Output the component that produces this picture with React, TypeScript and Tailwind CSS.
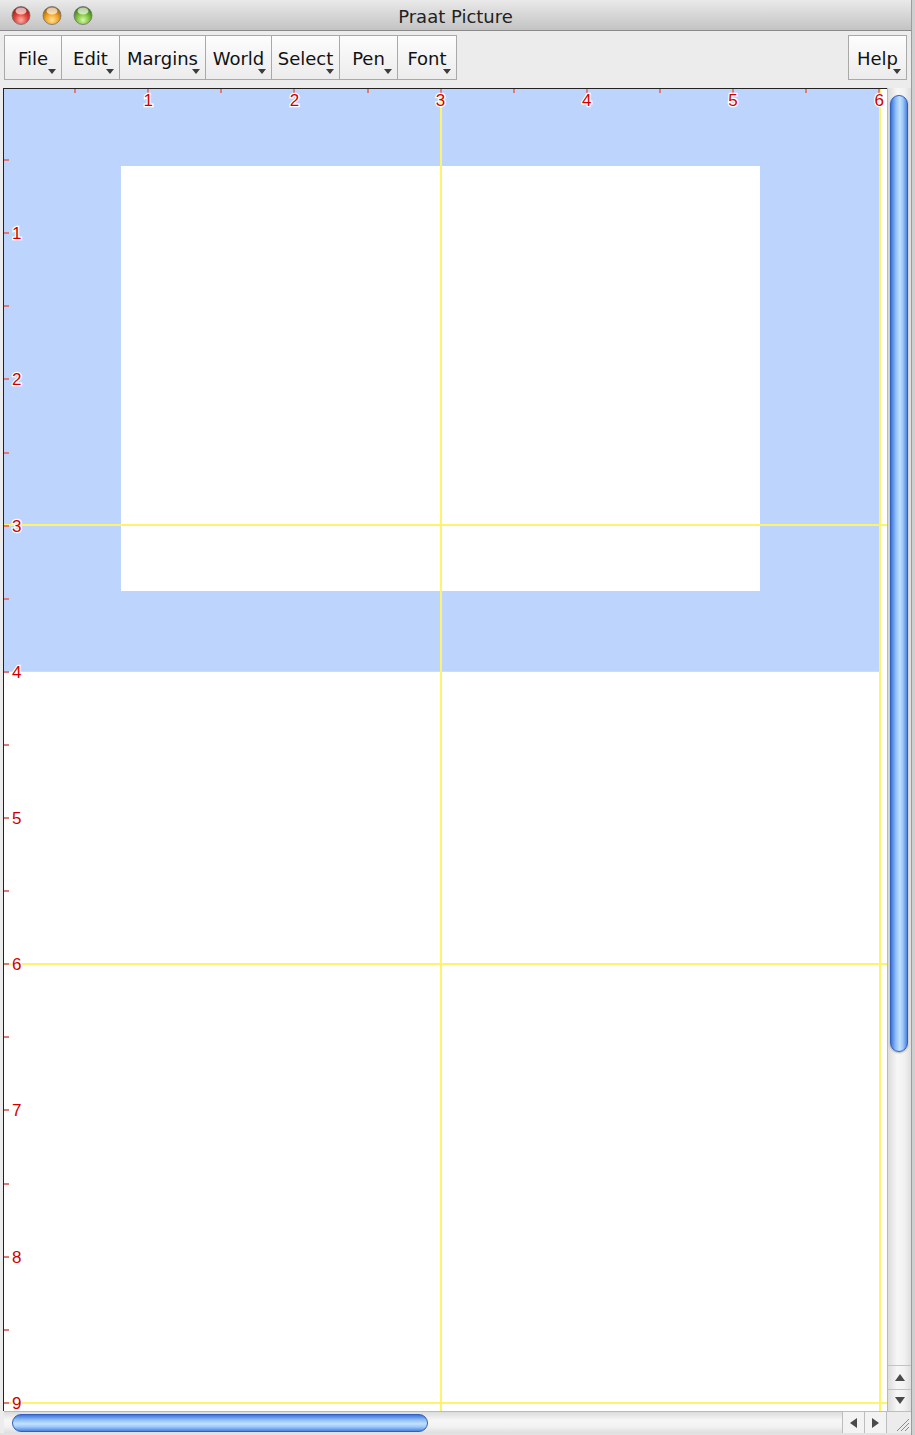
import React from 'react';

const menus = [
  { label: 'File', w: 'w-[58px]' },
  { label: 'Edit', w: 'w-[59px]' },
  { label: 'Margins', w: 'w-[87px]' },
  { label: 'World', w: 'w-[67px]' },
  { label: 'Select', w: 'w-[69px]' },
  { label: 'Pen', w: 'w-[59px]' },
  { label: 'Font', w: 'w-[60px]' },
];

// picture coordinates: inch -> svg pixel
const PX = 146.2;
const sx = (x: number) => PX * x - 2;
const sy = (y: number) => PX * y - 2;

function MenuButton({ label, w, first }: { label: string; w: string; first?: boolean }) {
  return (
    <div
      className={`relative ${w} h-[45px] ${first ? '' : '-ml-px'} flex items-center justify-center border border-[#a9a9a9] bg-gradient-to-b from-[#fdfdfd] to-[#ececec] text-[18px] text-[#111]`}
      style={{ fontFamily: '"DejaVu Sans", sans-serif' }}
    >
      <span className="pt-[2px]">{label}</span>
      <span className="absolute right-[5px] bottom-[5px] w-0 h-0 border-l-[4px] border-r-[4px] border-t-[5px] border-l-transparent border-r-transparent border-t-[#3c3c3c]" />
    </div>
  );
}

function TrafficLights() {
  const lights = [
    { cx: 21, a: '#ffb3a8', b: '#e0443a', c: '#9e1d16' },
    { cx: 52, a: '#ffe39a', b: '#f0a424', c: '#a3650c' },
    { cx: 83, a: '#d8f7a8', b: '#7cc13c', c: '#3f7b18' },
  ];
  return (
    <svg width="100" height="31" className="shrink-0">
      <defs>
        {lights.map((l, i) => (
          <radialGradient key={i} id={`tl${i}`} cx="50%" cy="75%" r="65%">
            <stop offset="0%" stopColor={l.a} />
            <stop offset="55%" stopColor={l.b} />
            <stop offset="100%" stopColor={l.c} />
          </radialGradient>
        ))}
      </defs>
      {lights.map((l, i) => (
        <g key={i}>
          <circle cx={l.cx} cy={15.5} r={9} fill={`url(#tl${i})`} stroke="#6e6e6e" strokeWidth="0.8" />
          <ellipse cx={l.cx} cy={11} rx={5.5} ry={3.5} fill="#ffffff" opacity="0.65" />
        </g>
      ))}
    </svg>
  );
}

function PictureCanvas() {
  const halves = Array.from({ length: 12 }, (_, i) => (i + 1) * 0.5);
  const vhalves = Array.from({ length: 18 }, (_, i) => (i + 1) * 0.5);
  const numFont = { fontFamily: '"Liberation Sans", Arial, sans-serif', fontSize: 17 };
  return (
    <svg width="883" height="1322" className="block bg-white overflow-visible">
      <rect x="0" y="0" width={sx(6)} height={sy(4)} fill="#bdd5fd" />
      <rect x="117" y="77" width="639" height="425" fill="#ffffff" />

      {/* yellow selection lines */}
      <g stroke="#fff36e" strokeWidth="2">
        <line x1="437" y1="0" x2="437" y2="1322" />
        <line x1="876" y1="0" x2="876" y2="1322" />
        <line x1="0" y1="436" x2="883" y2="436" />
        <line x1="0" y1="875" x2="883" y2="875" />
        <line x1="0" y1="1314" x2="883" y2="1314" />
      </g>

      {/* ruler ticks */}
      <g stroke="#df7a7a" strokeWidth="2">
        {halves.map((x) => (
          <line key={`t${x}`} x1={Math.round(sx(x))} y1="0" x2={Math.round(sx(x))} y2="4" />
        ))}
        {vhalves.map((y) => (
          <line key={`l${y}`} x1="0" y1={Math.round(sy(y))} x2="5" y2={Math.round(sy(y))} />
        ))}
      </g>

      <g fill="#d00000" stroke="#ffffff" strokeWidth="2.5" paintOrder="stroke" style={numFont}>
        {[1, 2, 3, 4, 5, 6].map((n) => (
          <text key={`x${n}`} x={sx(n)} y="17" textAnchor="middle">
            {n}
          </text>
        ))}
        {[1, 2, 3, 4, 5, 6, 7, 8, 9].map((n) => (
          <text key={`y${n}`} x="8" y={sy(n) + 6}>
            {n}
          </text>
        ))}
      </g>
    </svg>
  );
}

function Arrow({ dir }: { dir: 'up' | 'down' | 'left' | 'right' }) {
  const cls = {
    up: 'border-l-[5px] border-r-[5px] border-b-[7px] border-l-transparent border-r-transparent border-b-[#4a4a4a]',
    down: 'border-l-[5px] border-r-[5px] border-t-[7px] border-l-transparent border-r-transparent border-t-[#4a4a4a]',
    left: 'border-t-[5px] border-b-[5px] border-r-[7px] border-t-transparent border-b-transparent border-r-[#4a4a4a]',
    right: 'border-t-[5px] border-b-[5px] border-l-[7px] border-t-transparent border-b-transparent border-l-[#4a4a4a]',
  }[dir];
  return <span className={`w-0 h-0 ${cls}`} />;
}

function VScrollbar() {
  return (
    <div className="w-[25px] h-full flex flex-col border-l border-[#b9b9b9] bg-[linear-gradient(90deg,#dcdcdc,#f7f7f7_40%,#f2f2f2_70%,#dedede)]">
      <div className="flex-1 pt-[7px] px-[2px]">
        <div className="h-[957px] w-[18px] rounded-full border border-[#2f5fbf] bg-[linear-gradient(90deg,#3e74d8,#8fbdf6_30%,#c4e2ff_55%,#9ac6fa_75%,#4c83dd)] shadow-[0_1px_2px_rgba(0,0,0,0.3)]" />
      </div>
      <div className="h-[24px] flex items-center justify-center border-t border-[#c2c2c2]">
        <Arrow dir="up" />
      </div>
      <div className="h-[22px] flex items-center justify-center border-t border-[#c2c2c2]">
        <Arrow dir="down" />
      </div>
    </div>
  );
}

function HScrollbar() {
  return (
    <div className="h-[22px] flex">
      <div className="w-[4px]" />
      <div className="flex-1 flex items-center pl-[8px] border-t border-[#b9b9b9] bg-[linear-gradient(180deg,#dcdcdc,#f7f7f7_40%,#f2f2f2_70%,#dedede)]">
        <div className="w-[416px] h-[18px] rounded-full border border-[#2f5fbf] bg-[linear-gradient(180deg,#3e74d8,#8fbdf6_30%,#c4e2ff_55%,#9ac6fa_75%,#4c83dd)]" />
      </div>
      <div className="w-[22px] flex items-center justify-center border-t border-l border-[#bdbdbd] bg-[#f3f3f3]">
        <Arrow dir="left" />
      </div>
      <div className="w-[22px] flex items-center justify-center border-t border-l border-[#bdbdbd] bg-[#f3f3f3]">
        <Arrow dir="right" />
      </div>
      <div className="w-[25px] flex items-end justify-end p-[2px] border-t border-l border-[#bdbdbd] bg-[#ececec]">
        <svg width="14" height="14">
          <g stroke="#8a8a8a" strokeWidth="1">
            <line x1="2" y1="14" x2="14" y2="2" />
            <line x1="6" y1="14" x2="14" y2="6" />
            <line x1="10" y1="14" x2="14" y2="10" />
          </g>
        </svg>
      </div>
    </div>
  );
}

export default function App() {
  return (
    <div className="w-[915px] h-[1435px] flex bg-[#cfcfcf] overflow-hidden">
      <div className="w-[912px] h-full flex flex-col bg-[#ececec] border-r border-[#9c9c9c]">
        {/* title bar */}
        <div className="h-[31px] shrink-0 relative flex items-center bg-gradient-to-b from-[#eaeaea] to-[#c3c3c3] border-b border-[#8a8a8a]">
          <TrafficLights />
          <div
            className="absolute inset-0 flex items-center justify-center pt-[2px] text-[18px] text-[#222]"
            style={{ fontFamily: '"DejaVu Sans", sans-serif' }}
          >
            Praat Picture
          </div>
        </div>

        {/* menu bar */}
        <div className="h-[57px] shrink-0 flex items-start justify-between pt-[4px] pl-[4px] pr-[4px]">
          <div className="flex">
            {menus.map((m, i) => (
              <MenuButton key={m.label} label={m.label} w={m.w} first={i === 0} />
            ))}
          </div>
          <MenuButton label="Help" w="w-[59px]" first />
        </div>

        {/* picture */}
        <div className="h-[1323px] shrink-0 flex pl-[3px]">
          <div className="border-t border-l border-[#222]">
            <PictureCanvas />
          </div>
          <VScrollbar />
        </div>

        <HScrollbar />
        <div className="flex-1 bg-[#e2e2e2]" />
      </div>
    </div>
  );
}
